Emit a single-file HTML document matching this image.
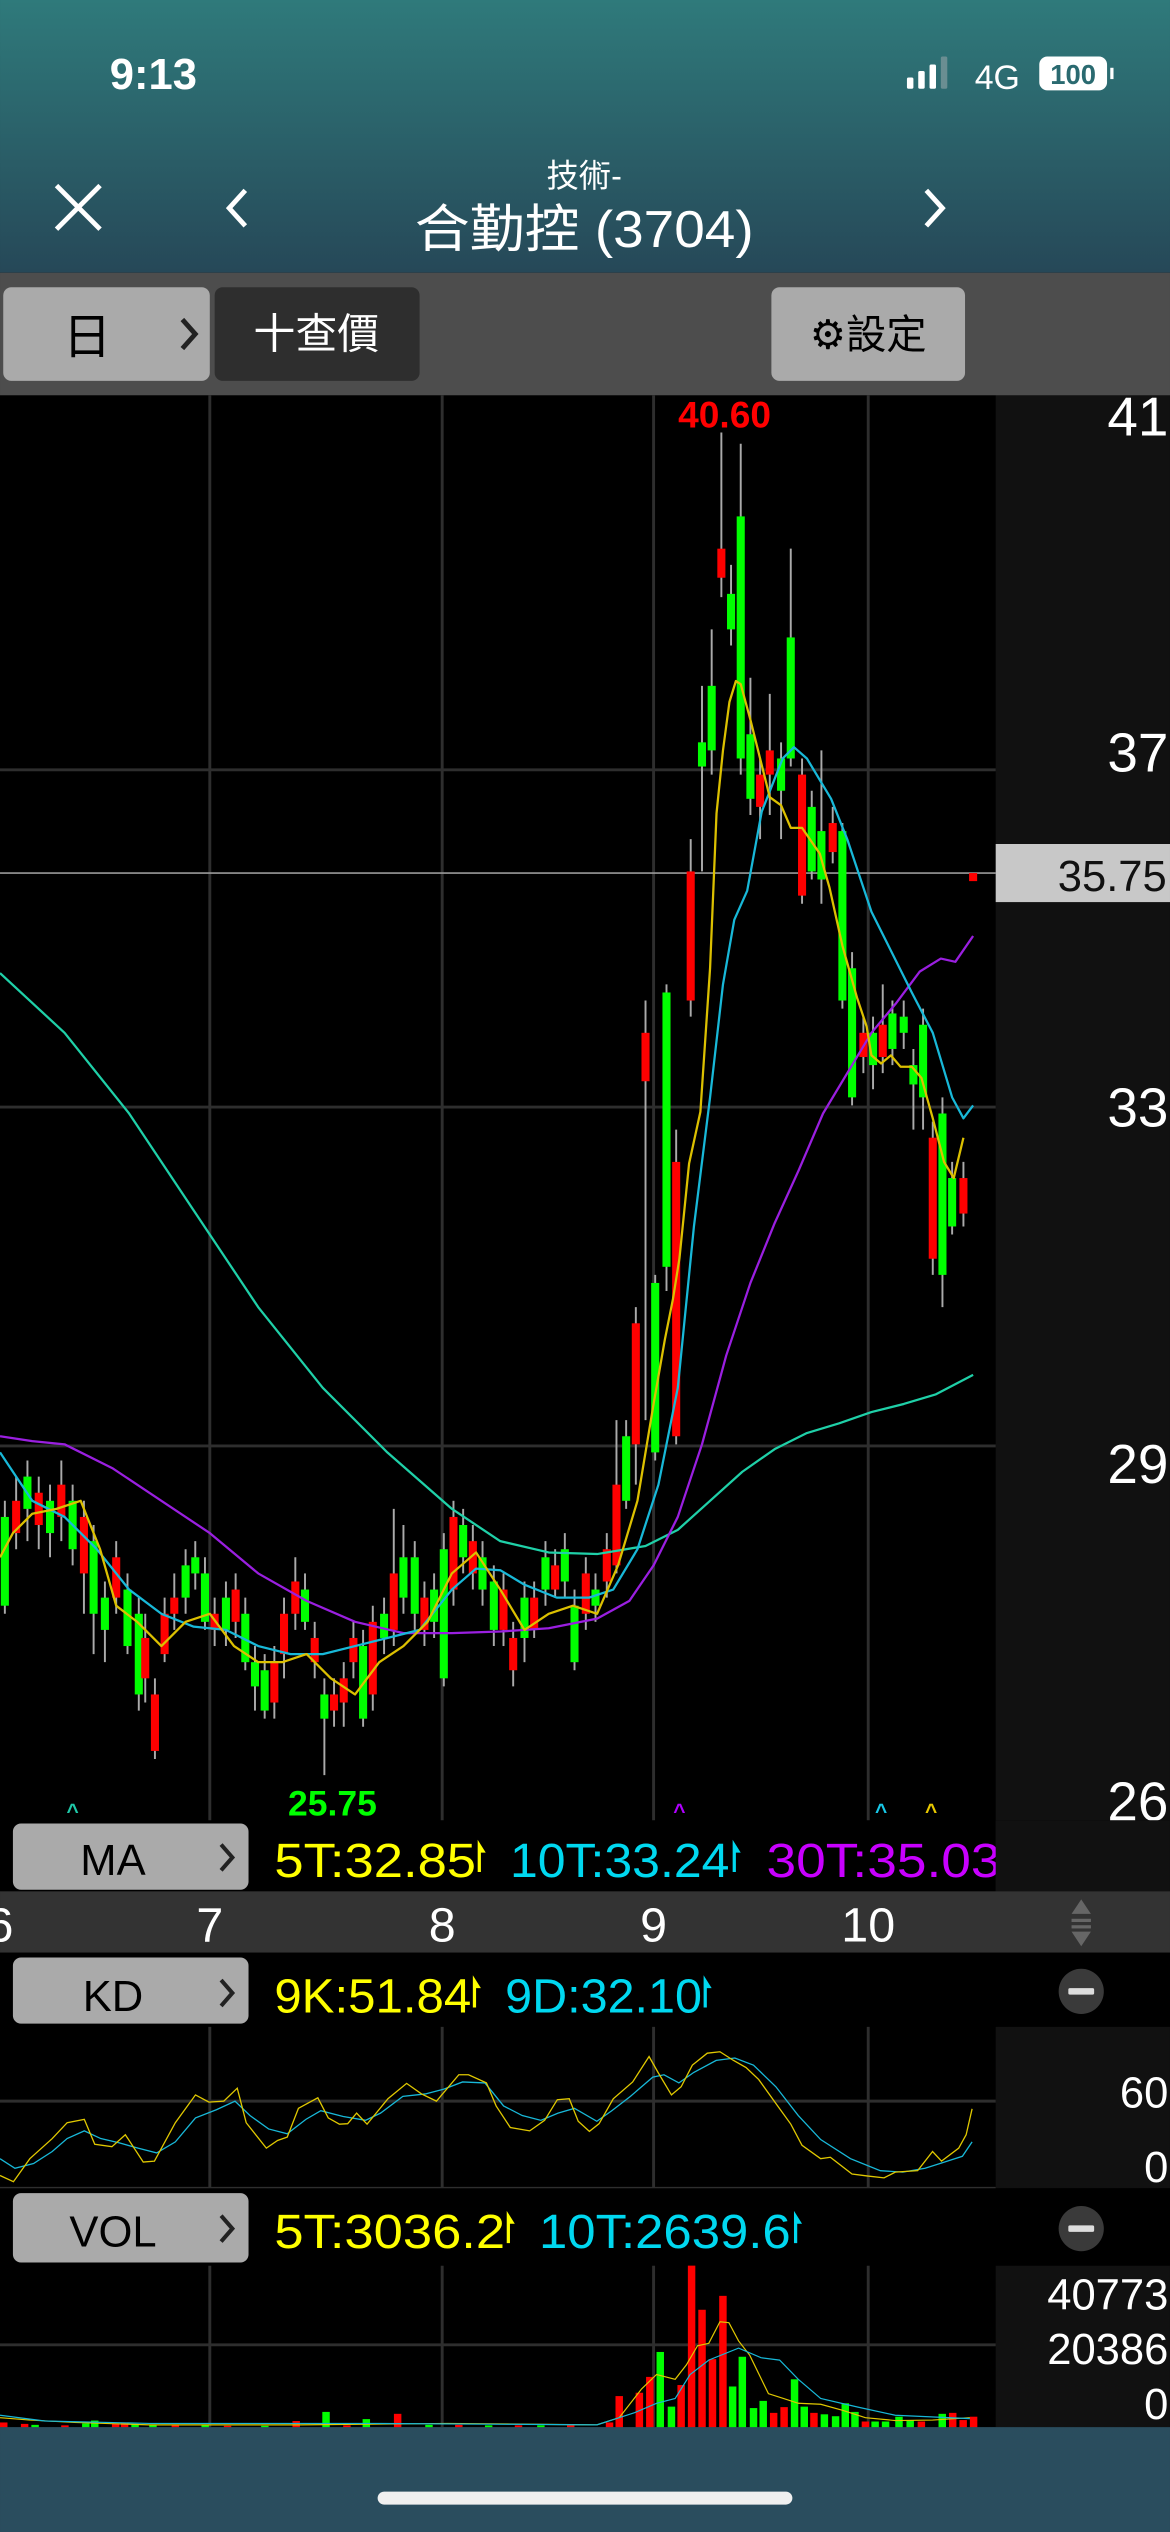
<!DOCTYPE html>
<html><head><meta charset="utf-8"><style>
html,body{margin:0;padding:0;background:#000;}
svg{display:block}
text{font-family:"Liberation Sans","Noto Sans CJK TC",sans-serif;}
</style></head><body>
<svg width="1170" height="2532" viewBox="0 0 725 1569" xmlns="http://www.w3.org/2000/svg">
<defs>
<linearGradient id="hg" x1="0" y1="0" x2="0" y2="1">
<stop offset="0" stop-color="#2f7a7b"/><stop offset="1" stop-color="#264858"/>
</linearGradient>
</defs>
<rect x="0" y="0" width="725" height="169" fill="url(#hg)"/>
<text x="68" y="55" fill="#fff" font-size="27" font-weight="bold">9:13</text>
<rect x="562" y="48" width="4" height="7" rx="1" fill="#fff"/>
<rect x="569" y="44" width="4" height="11" rx="1" fill="#fff"/>
<rect x="576" y="40" width="4" height="15" rx="1" fill="#fff"/>
<rect x="583" y="35" width="4" height="20" rx="1" fill="#6a8e92"/>
<text x="604" y="55" fill="#fff" font-size="21">4G</text>
<rect x="644" y="35" width="42" height="21" rx="5" fill="#fff"/>
<text x="665" y="52" fill="#2a6a70" font-size="17" font-weight="bold" text-anchor="middle">100</text>
<rect x="688" y="42" width="2" height="7" fill="#fff"/>
<path d="M35 115 L62 142 M62 115 L35 142" stroke="#fff" stroke-width="3" fill="none"/>
<path d="M152 118 L142 129 L152 140" stroke="#fff" stroke-width="3" fill="none"/>
<path d="M574 118 L584 129 L574 140" stroke="#fff" stroke-width="3" fill="none"/>
<text x="362" y="116" fill="#fff" font-size="20" text-anchor="middle">技術-</text>
<text x="362" y="153" fill="#fff" font-size="32" text-anchor="middle" textLength="210" lengthAdjust="spacingAndGlyphs">合勤控 (3704)</text>
<rect x="0" y="169" width="725" height="76" fill="#4d4d4d"/>
<rect x="2" y="178" width="128" height="58" rx="5" fill="#aaa"/>
<text x="54" y="219" fill="#000" font-size="30" text-anchor="middle">日</text>
<path d="M113 198 L121 207 L113 216" stroke="#222" stroke-width="3" fill="none"/>
<rect x="133" y="178" width="127" height="58" rx="5" fill="#2e2e2e"/>
<text x="196" y="216" fill="#fff" font-size="26" text-anchor="middle">十查價</text>
<rect x="478" y="178" width="120" height="58" rx="5" fill="#aaa"/>
<text x="538" y="216" fill="#000" font-size="25" text-anchor="middle">⚙設定</text>

<rect x="0" y="245" width="617" height="883" fill="#000"/>
<rect x="617" y="245" width="108" height="883" fill="#111"/>
<g stroke="#2e2e2e" stroke-width="1.8">
<line x1="0" y1="477" x2="617" y2="477"/><line x1="0" y1="686" x2="617" y2="686"/><line x1="0" y1="896" x2="617" y2="896"/>
<line x1="130" y1="245" x2="130" y2="1128"/><line x1="274" y1="245" x2="274" y2="1128"/><line x1="405" y1="245" x2="405" y2="1128"/><line x1="538" y1="245" x2="538" y2="1128"/>
</g>
<line x1="0" y1="541" x2="617" y2="541" stroke="#999" stroke-width="1"/>
<g fill="#fff" font-size="34" text-anchor="end">
<text x="724" y="270">41</text><text x="724" y="478">37</text><text x="724" y="698">33</text><text x="724" y="919">29</text><text x="724" y="1128">26</text>
</g>
<rect x="617" y="523" width="108" height="36" fill="#c8c8c8"/>
<text x="723" y="552" fill="#111" font-size="27" text-anchor="end">35.75</text>
<text x="449" y="265" fill="#ff0000" font-size="23" font-weight="bold" text-anchor="middle">40.60</text>
<text x="206" y="1125" fill="#00ff00" font-size="22" font-weight="bold" text-anchor="middle">25.75</text>
<g font-size="13" text-anchor="middle" font-weight="bold">
<text x="45" y="1127" fill="#1fc8a8">^</text><text x="421" y="1127" fill="#b000ff">^</text><text x="546" y="1127" fill="#18c8e8">^</text><text x="577" y="1127" fill="#e8c800">^</text>
</g>
<g>
<g stroke="#aaa" stroke-width="1.2">
<line x1="3" y1="930" x2="3" y2="1000"/><line x1="10" y1="915" x2="10" y2="960"/><line x1="17" y1="905" x2="17" y2="955"/><line x1="24" y1="915" x2="24" y2="960"/><line x1="31" y1="920" x2="31" y2="965"/><line x1="38" y1="905" x2="38" y2="955"/><line x1="45" y1="920" x2="45" y2="970"/><line x1="52" y1="930" x2="52" y2="1000"/><line x1="58" y1="945" x2="58" y2="1025"/><line x1="65" y1="980" x2="65" y2="1030"/><line x1="72" y1="955" x2="72" y2="1000"/><line x1="79" y1="975" x2="79" y2="1025"/><line x1="86" y1="990" x2="86" y2="1060"/><line x1="90" y1="1000" x2="90" y2="1055"/><line x1="96" y1="1040" x2="96" y2="1090"/><line x1="102" y1="990" x2="102" y2="1030"/><line x1="108" y1="975" x2="108" y2="1010"/><line x1="115" y1="960" x2="115" y2="1000"/><line x1="121" y1="955" x2="121" y2="985"/><line x1="127" y1="965" x2="127" y2="1010"/><line x1="133" y1="990" x2="133" y2="1020"/><line x1="140" y1="980" x2="140" y2="1020"/><line x1="146" y1="975" x2="146" y2="1015"/><line x1="152" y1="990" x2="152" y2="1035"/><line x1="158" y1="1020" x2="158" y2="1060"/><line x1="164" y1="1025" x2="164" y2="1065"/><line x1="170" y1="1020" x2="170" y2="1065"/><line x1="176" y1="990" x2="176" y2="1040"/><line x1="183" y1="965" x2="183" y2="1010"/><line x1="189" y1="975" x2="189" y2="1010"/><line x1="195" y1="1005" x2="195" y2="1040"/><line x1="201" y1="1040" x2="201" y2="1100"/><line x1="207" y1="1040" x2="207" y2="1070"/><line x1="213" y1="1030" x2="213" y2="1070"/><line x1="219" y1="1005" x2="219" y2="1040"/><line x1="225" y1="1010" x2="225" y2="1070"/><line x1="231" y1="995" x2="231" y2="1060"/><line x1="238" y1="990" x2="238" y2="1025"/><line x1="244" y1="935" x2="244" y2="1020"/><line x1="250" y1="945" x2="250" y2="1000"/><line x1="257" y1="955" x2="257" y2="1010"/><line x1="263" y1="980" x2="263" y2="1020"/><line x1="269" y1="975" x2="269" y2="1015"/><line x1="275" y1="950" x2="275" y2="1045"/><line x1="281" y1="930" x2="281" y2="995"/><line x1="287" y1="935" x2="287" y2="975"/><line x1="293" y1="945" x2="293" y2="985"/><line x1="299" y1="955" x2="299" y2="995"/><line x1="306" y1="970" x2="306" y2="1020"/><line x1="312" y1="975" x2="312" y2="1020"/><line x1="318" y1="1005" x2="318" y2="1045"/><line x1="325" y1="980" x2="325" y2="1030"/><line x1="331" y1="980" x2="331" y2="1015"/><line x1="338" y1="955" x2="338" y2="995"/><line x1="344" y1="960" x2="344" y2="990"/><line x1="350" y1="950" x2="350" y2="990"/><line x1="356" y1="985" x2="356" y2="1035"/><line x1="363" y1="965" x2="363" y2="1010"/><line x1="369" y1="975" x2="369" y2="1005"/><line x1="376" y1="950" x2="376" y2="990"/><line x1="382" y1="880" x2="382" y2="975"/><line x1="388" y1="880" x2="388" y2="935"/><line x1="394" y1="810" x2="394" y2="920"/><line x1="400" y1="620" x2="400" y2="880"/><line x1="406" y1="790" x2="406" y2="905"/><line x1="413" y1="610" x2="413" y2="800"/><line x1="419" y1="700" x2="419" y2="895"/><line x1="428" y1="520" x2="428" y2="630"/><line x1="435" y1="425" x2="435" y2="540"/><line x1="441" y1="390" x2="441" y2="480"/><line x1="447" y1="268" x2="447" y2="370"/><line x1="453" y1="350" x2="453" y2="400"/><line x1="459" y1="275" x2="459" y2="480"/><line x1="465" y1="420" x2="465" y2="505"/><line x1="471" y1="470" x2="471" y2="520"/><line x1="477" y1="430" x2="477" y2="505"/><line x1="484" y1="460" x2="484" y2="520"/><line x1="490" y1="340" x2="490" y2="475"/><line x1="497" y1="470" x2="497" y2="560"/><line x1="503" y1="490" x2="503" y2="545"/><line x1="509" y1="465" x2="509" y2="560"/><line x1="516" y1="500" x2="516" y2="535"/><line x1="522" y1="510" x2="522" y2="625"/><line x1="528" y1="590" x2="528" y2="685"/><line x1="535" y1="630" x2="535" y2="665"/><line x1="541" y1="630" x2="541" y2="675"/><line x1="547" y1="610" x2="547" y2="665"/><line x1="553" y1="620" x2="553" y2="660"/><line x1="560" y1="620" x2="560" y2="650"/><line x1="566" y1="650" x2="566" y2="700"/><line x1="572" y1="625" x2="572" y2="700"/><line x1="578" y1="695" x2="578" y2="790"/><line x1="584" y1="680" x2="584" y2="810"/><line x1="590" y1="720" x2="590" y2="765"/><line x1="597" y1="720" x2="597" y2="760"/>
</g>
<g fill="#00ff00">
<rect x="0.5" y="940" width="5" height="55"/><rect x="14.5" y="915" width="5" height="20"/><rect x="28.5" y="930" width="5" height="20"/><rect x="42.5" y="930" width="5" height="30"/><rect x="55.5" y="955" width="5" height="45"/><rect x="62.5" y="990" width="5" height="20"/><rect x="76.5" y="985" width="5" height="35"/><rect x="83.5" y="1000" width="5" height="50"/><rect x="112.5" y="970" width="5" height="20"/><rect x="118.5" y="965" width="5" height="10"/><rect x="124.5" y="975" width="5" height="30"/><rect x="137.5" y="990" width="5" height="20"/><rect x="149.5" y="1000" width="5" height="30"/><rect x="155.5" y="1030" width="5" height="15"/><rect x="161.5" y="1035" width="5" height="25"/><rect x="186.5" y="985" width="5" height="20"/><rect x="198.5" y="1050" width="5" height="15"/><rect x="222.5" y="1020" width="5" height="45"/><rect x="235.5" y="1000" width="5" height="15"/><rect x="247.5" y="965" width="5" height="25"/><rect x="254.5" y="965" width="5" height="35"/><rect x="266.5" y="985" width="5" height="20"/><rect x="272.5" y="960" width="5" height="80"/><rect x="284.5" y="945" width="5" height="20"/><rect x="296.5" y="965" width="5" height="20"/><rect x="303.5" y="980" width="5" height="30"/><rect x="322.5" y="990" width="5" height="25"/><rect x="335.5" y="965" width="5" height="20"/><rect x="347.5" y="960" width="5" height="20"/><rect x="353.5" y="995" width="5" height="35"/><rect x="366.5" y="985" width="5" height="10"/><rect x="385.5" y="890" width="5" height="40"/><rect x="403.5" y="795" width="5" height="105"/><rect x="410.5" y="615" width="5" height="170"/><rect x="432.5" y="460" width="5" height="15"/><rect x="438.5" y="425" width="5" height="40"/><rect x="450.5" y="368" width="5" height="22"/><rect x="456.5" y="320" width="5" height="150"/><rect x="462.5" y="455" width="5" height="40"/><rect x="481.5" y="470" width="5" height="20"/><rect x="487.5" y="395" width="5" height="75"/><rect x="500.5" y="500" width="5" height="40"/><rect x="506.5" y="515" width="5" height="30"/><rect x="519.5" y="515" width="5" height="105"/><rect x="525.5" y="600" width="5" height="80"/><rect x="538.5" y="640" width="5" height="20"/><rect x="550.5" y="628" width="5" height="22"/><rect x="557.5" y="630" width="5" height="10"/><rect x="563.5" y="660" width="5" height="12"/><rect x="569.5" y="635" width="5" height="45"/><rect x="581.5" y="690" width="5" height="100"/><rect x="587.5" y="730" width="5" height="30"/>
</g>
<g fill="#ff0000">
<rect x="7.5" y="930" width="5" height="20"/><rect x="21.5" y="925" width="5" height="20"/><rect x="35.5" y="920" width="5" height="20"/><rect x="49.5" y="940" width="5" height="35"/><rect x="69.5" y="965" width="5" height="25"/><rect x="87.5" y="1015" width="5" height="25"/><rect x="93.5" y="1050" width="5" height="35"/><rect x="99.5" y="1000" width="5" height="25"/><rect x="105.5" y="990" width="5" height="10"/><rect x="130.5" y="1000" width="5" height="10"/><rect x="143.5" y="985" width="5" height="20"/><rect x="167.5" y="1030" width="5" height="25"/><rect x="173.5" y="1000" width="5" height="25"/><rect x="180.5" y="980" width="5" height="20"/><rect x="192.5" y="1015" width="5" height="15"/><rect x="204.5" y="1050" width="5" height="10"/><rect x="210.5" y="1040" width="5" height="15"/><rect x="216.5" y="1015" width="5" height="15"/><rect x="228.5" y="1005" width="5" height="45"/><rect x="241.5" y="975" width="5" height="35"/><rect x="260.5" y="990" width="5" height="20"/><rect x="278.5" y="940" width="5" height="45"/><rect x="290.5" y="955" width="5" height="20"/><rect x="309.5" y="985" width="5" height="25"/><rect x="315.5" y="1015" width="5" height="20"/><rect x="328.5" y="990" width="5" height="20"/><rect x="341.5" y="970" width="5" height="15"/><rect x="360.5" y="975" width="5" height="25"/><rect x="373.5" y="960" width="5" height="20"/><rect x="379.5" y="920" width="5" height="50"/><rect x="391.5" y="820" width="5" height="75"/><rect x="397.5" y="640" width="5" height="30"/><rect x="416.5" y="720" width="5" height="170"/><rect x="425.5" y="540" width="5" height="80"/><rect x="444.5" y="340" width="5" height="18"/><rect x="468.5" y="480" width="5" height="20"/><rect x="474.5" y="465" width="5" height="15"/><rect x="494.5" y="480" width="5" height="75"/><rect x="513.5" y="510" width="5" height="18"/><rect x="532.5" y="640" width="5" height="15"/><rect x="544.5" y="635" width="5" height="20"/><rect x="575.5" y="705" width="5" height="75"/><rect x="594.5" y="730" width="5" height="22"/><rect x="600.5" y="541" width="5" height="5"/>
</g>
</g>
<g fill="none" stroke-width="1.4" stroke-linejoin="round">
<polyline stroke="#1fd0a8" points="0,603 40,640 80,690 120,750 160,810 200,860 240,900 280,935 310,955 340,962 370,963 400,958 420,948 440,930 460,912 480,898 500,888 520,882 540,875 560,870 580,864 603,852"/>
<polyline stroke="#9a1fe0" points="0,890 20,893 40,895 70,910 100,930 130,950 160,975 190,992 220,1005 250,1012 280,1012 310,1011 340,1009 370,1003 390,992 405,970 420,940 435,895 450,840 465,795 480,758 495,725 510,690 525,665 540,640 555,622 570,602 583,594 592,596 603,580"/>
<polyline stroke="#18b8d8" points="0,900 10,915 20,930 40,940 60,960 80,985 100,1000 120,1008 140,1010 160,1020 180,1025 200,1025 220,1020 240,1015 260,1010 280,985 295,972 310,973 325,982 345,990 365,990 380,985 395,960 408,920 420,860 430,760 440,680 448,610 455,570 463,552 472,503 485,470 492,463 500,470 515,495 525,520 540,565 550,585 565,615 578,640 590,680 597,693 603,685"/>
<polyline stroke="#dcc000" points="0,965 8,950 20,938 35,935 50,930 62,960 72,995 85,1005 100,1020 115,1005 130,1000 145,1020 160,1030 175,1030 190,1025 205,1040 220,1050 235,1030 250,1020 265,1005 280,975 295,962 310,985 325,1010 340,1000 355,995 370,1000 383,970 395,930 405,870 412,830 417,805 421,780 427,721 434,689 440,600 444,504 448,465 452,435 456,422 459,424 465,446 477,494 484,499 490,513 497,513 508,529 514,550 522,586 531,618 537,636 540,654 546,659 552,654 558,661 565,661 571,668 578,693 585,720 591,730 597,705"/>
</g>

<rect x="0" y="1128" width="617" height="44" fill="#000"/>
<rect x="617" y="1128" width="108" height="44" fill="#111"/>
<rect x="8" y="1130" width="146" height="41" rx="5" fill="#aaa"/>
<text x="70" y="1162" fill="#000" font-size="27" text-anchor="middle">MA</text>
<path d="M137 1143 L144 1151 L137 1159" stroke="#222" stroke-width="2.5" fill="none"/>
<g font-size="30">
<text x="170" y="1163" fill="#ffff00" textLength="125" lengthAdjust="spacingAndGlyphs">5T:32.85</text>
<path d="M296 1140 L301 1148 L298 1148 L298 1160 L296 1160 Z" fill="#ffff00"/>
<text x="316" y="1163" fill="#00d8f0" textLength="136" lengthAdjust="spacingAndGlyphs">10T:33.24</text>
<path d="M454 1140 L459 1148 L456 1148 L456 1160 L454 1160 Z" fill="#00d8f0"/>
<text x="475" y="1163" fill="#c800ff" textLength="145" lengthAdjust="spacingAndGlyphs">30T:35.03</text>
</g>
<rect x="617" y="1128" width="108" height="44" fill="#111"/>
<rect x="0" y="1172" width="725" height="38" fill="#333"/>
<g fill="#fff" font-size="30" text-anchor="middle">
<text x="0" y="1203">6</text><text x="130" y="1203">7</text><text x="274" y="1203">8</text><text x="405" y="1203">9</text><text x="538" y="1203">10</text>
</g>
<path d="M664 1186 L670 1177 L676 1186 Z M664 1197 L670 1206 L676 1197 Z" fill="#666"/>
<rect x="664" y="1189" width="12" height="2" fill="#666"/><rect x="664" y="1193" width="12" height="2" fill="#666"/>
<rect x="0" y="1210" width="725" height="46" fill="#000"/>
<rect x="8" y="1213" width="146" height="41" rx="5" fill="#aaa"/>
<text x="70" y="1246" fill="#000" font-size="27" text-anchor="middle">KD</text>
<path d="M137 1227 L144 1235 L137 1243" stroke="#222" stroke-width="2.5" fill="none"/>
<g font-size="30">
<text x="170" y="1247" fill="#ffff00" textLength="122" lengthAdjust="spacingAndGlyphs">9K:51.84</text>
<path d="M293 1224 L298 1232 L295 1232 L295 1244 L293 1244 Z" fill="#ffff00"/>
<text x="313" y="1247" fill="#00d8f0" textLength="122" lengthAdjust="spacingAndGlyphs">9D:32.10</text>
<path d="M436 1224 L441 1232 L438 1232 L438 1244 L436 1244 Z" fill="#00d8f0"/>
</g>
<circle cx="670" cy="1234" r="14" fill="#3a3a3a"/><rect x="662" y="1232" width="16" height="4" rx="1" fill="#ddd"/>
<rect x="0" y="1256" width="617" height="100" fill="#000"/>
<rect x="617" y="1256" width="108" height="100" fill="#111"/>
<g stroke="#2e2e2e" stroke-width="1.8">
<line x1="0" y1="1302" x2="617" y2="1302"/><line x1="0" y1="1356" x2="617" y2="1356"/>
<line x1="130" y1="1256" x2="130" y2="1356"/><line x1="274" y1="1256" x2="274" y2="1356"/><line x1="405" y1="1256" x2="405" y2="1356"/><line x1="538" y1="1256" x2="538" y2="1356"/>
</g>
<text x="724" y="1306" fill="#fff" font-size="27" text-anchor="end">60</text>
<text x="724" y="1352" fill="#fff" font-size="27" text-anchor="end">0</text>
<g transform="translate(0,1102.9) scale(0.4623,0.29718)" fill="none">
<polyline vector-effect="non-scaling-stroke" stroke="#18b8d8" stroke-width="1.3" points="0,790 20,810 45,800 70,775 90,748 113,732 135,748 160,757 185,768 210,778 235,755 262,705 290,688 315,670 335,700 360,728 385,738 410,708 430,690 460,702 490,710 510,695 540,660 570,655 595,645 620,630 650,632 675,680 700,700 725,710 748,695 770,685 800,712 820,690 845,660 875,620 890,615 910,632 930,610 960,585 985,580 1010,595 1040,640 1070,700 1100,750 1140,790 1180,815 1210,818 1240,810 1260,800 1290,785 1303,755"/>
<polyline vector-effect="non-scaling-stroke" stroke="#e0c800" stroke-width="1.3" points="0,825 18,838 40,790 70,748 90,715 113,708 127,760 150,765 168,740 192,797 207,795 235,715 262,657 280,672 300,670 318,643 330,715 357,768 372,752 385,745 400,685 426,663 440,705 455,718 466,717 478,695 492,718 520,665 545,633 565,655 585,670 615,615 628,615 652,632 665,680 684,725 710,732 730,710 747,667 763,665 775,712 790,733 803,717 822,665 848,630 870,577 882,610 900,657 913,640 928,595 948,570 965,567 983,585 1000,600 1017,625 1040,675 1060,718 1075,762 1100,790 1113,787 1142,822 1162,826 1185,830 1200,818 1230,815 1250,775 1262,795 1285,768 1295,740 1303,686"/>
</g>
<rect x="0" y="1356" width="725" height="48" fill="#000"/>
<rect x="8" y="1359" width="146" height="43" rx="5" fill="#aaa"/>
<text x="70" y="1392" fill="#000" font-size="27" text-anchor="middle">VOL</text>
<path d="M137 1373 L144 1381 L137 1389" stroke="#222" stroke-width="2.5" fill="none"/>
<g font-size="30">
<text x="170" y="1393" fill="#ffff00" textLength="143" lengthAdjust="spacingAndGlyphs">5T:3036.2</text>
<path d="M314 1370 L319 1378 L316 1378 L316 1390 L314 1390 Z" fill="#ffff00"/>
<text x="334" y="1393" fill="#00d8f0" textLength="156" lengthAdjust="spacingAndGlyphs">10T:2639.6</text>
<path d="M492 1370 L497 1378 L494 1378 L494 1390 L492 1390 Z" fill="#00d8f0"/>
</g>
<circle cx="670" cy="1381" r="14" fill="#3a3a3a"/><rect x="662" y="1379" width="16" height="4" rx="1" fill="#ddd"/>
<rect x="0" y="1404" width="617" height="100" fill="#000"/>
<rect x="617" y="1404" width="108" height="100" fill="#111"/>
<g stroke="#2e2e2e" stroke-width="1.8">
<line x1="0" y1="1453" x2="617" y2="1453"/>
<line x1="130" y1="1404" x2="130" y2="1504"/><line x1="274" y1="1404" x2="274" y2="1504"/><line x1="405" y1="1404" x2="405" y2="1504"/><line x1="538" y1="1404" x2="538" y2="1504"/>
</g>
<g fill="#fff" font-size="27" text-anchor="end">
<text x="724" y="1431">40773</text><text x="724" y="1465">20386</text><text x="724" y="1499">0</text>
</g>
<g transform="translate(0,1102.9) scale(0.4623,0.29718)">
<g fill="#ff0000">
<rect x="0" y="1340" width="10" height="15"/><rect x="28" y="1343" width="10" height="12"/><rect x="82" y="1346" width="10" height="9"/><rect x="150" y="1342" width="10" height="13"/><rect x="162" y="1340" width="10" height="15"/><rect x="230" y="1346" width="10" height="9"/><rect x="300" y="1347" width="10" height="8"/><rect x="392" y="1337" width="10" height="18"/><rect x="460" y="1346" width="10" height="9"/><rect x="528" y="1322" width="10" height="33"/><rect x="610" y="1345" width="10" height="10"/><rect x="690" y="1346" width="10" height="9"/><rect x="760" y="1346" width="10" height="9"/><rect x="812" y="1340" width="10" height="15"/><rect x="825" y="1285" width="10" height="70"/><rect x="852" y="1278" width="10" height="77"/><rect x="866" y="1245" width="10" height="110"/><rect x="908" y="1262" width="10" height="93"/><rect x="922" y="1013" width="10" height="342"/><rect x="936" y="1105" width="10" height="250"/><rect x="950" y="1208" width="10" height="147"/><rect x="964" y="1076" width="10" height="279"/><rect x="1032" y="1320" width="10" height="35"/><rect x="1046" y="1308" width="10" height="47"/><rect x="1086" y="1320" width="10" height="35"/><rect x="1155" y="1338" width="10" height="17"/><rect x="1230" y="1338" width="10" height="17"/><rect x="1272" y="1320" width="10" height="35"/><rect x="1286" y="1335" width="10" height="20"/><rect x="1300" y="1328" width="10" height="27"/>
</g>
<g fill="#00ff00">
<rect x="42" y="1345" width="10" height="10"/><rect x="110" y="1342" width="10" height="13"/><rect x="122" y="1336" width="10" height="19"/><rect x="176" y="1343" width="10" height="12"/><rect x="200" y="1345" width="10" height="10"/><rect x="270" y="1346" width="10" height="9"/><rect x="350" y="1347" width="10" height="8"/><rect x="432" y="1318" width="10" height="37"/><rect x="486" y="1333" width="10" height="22"/><rect x="570" y="1345" width="10" height="10"/><rect x="650" y="1346" width="10" height="9"/><rect x="720" y="1346" width="10" height="9"/><rect x="880" y="1193" width="10" height="162"/><rect x="895" y="1307" width="10" height="48"/><rect x="977" y="1265" width="10" height="90"/><rect x="990" y="1203" width="10" height="152"/><rect x="1005" y="1310" width="10" height="45"/><rect x="1018" y="1295" width="10" height="60"/><rect x="1060" y="1250" width="10" height="105"/><rect x="1073" y="1307" width="10" height="48"/><rect x="1100" y="1323" width="10" height="32"/><rect x="1115" y="1327" width="10" height="28"/><rect x="1128" y="1300" width="10" height="55"/><rect x="1141" y="1318" width="10" height="37"/><rect x="1168" y="1338" width="10" height="17"/><rect x="1182" y="1338" width="10" height="17"/><rect x="1200" y="1328" width="10" height="27"/><rect x="1215" y="1335" width="10" height="20"/><rect x="1258" y="1322" width="10" height="33"/>
</g>
<polyline vector-effect="non-scaling-stroke" fill="none" stroke="#e0c800" stroke-width="1.2" points="0,1330 40,1335 100,1340 200,1345 400,1345 600,1342 800,1345 830,1330 860,1270 880,1240 905,1250 920,1220 935,1180 950,1175 965,1130 977,1132 990,1170 1005,1200 1030,1280 1050,1290 1070,1300 1100,1302 1130,1315 1160,1330 1200,1336 1250,1335 1300,1330"/>
<polyline vector-effect="non-scaling-stroke" fill="none" stroke="#18b8d8" stroke-width="1.2" points="0,1325 60,1337 200,1342 500,1342 800,1345 850,1320 880,1300 905,1290 925,1240 950,1210 990,1185 1020,1205 1045,1210 1070,1250 1100,1290 1150,1308 1200,1325 1300,1332"/>
</g>
<rect x="0" y="1504" width="725" height="65" fill="#2a4d5e"/>
<rect x="234" y="1544" width="257" height="8" rx="4" fill="#f0f0f0"/>
</svg>
</body></html>
